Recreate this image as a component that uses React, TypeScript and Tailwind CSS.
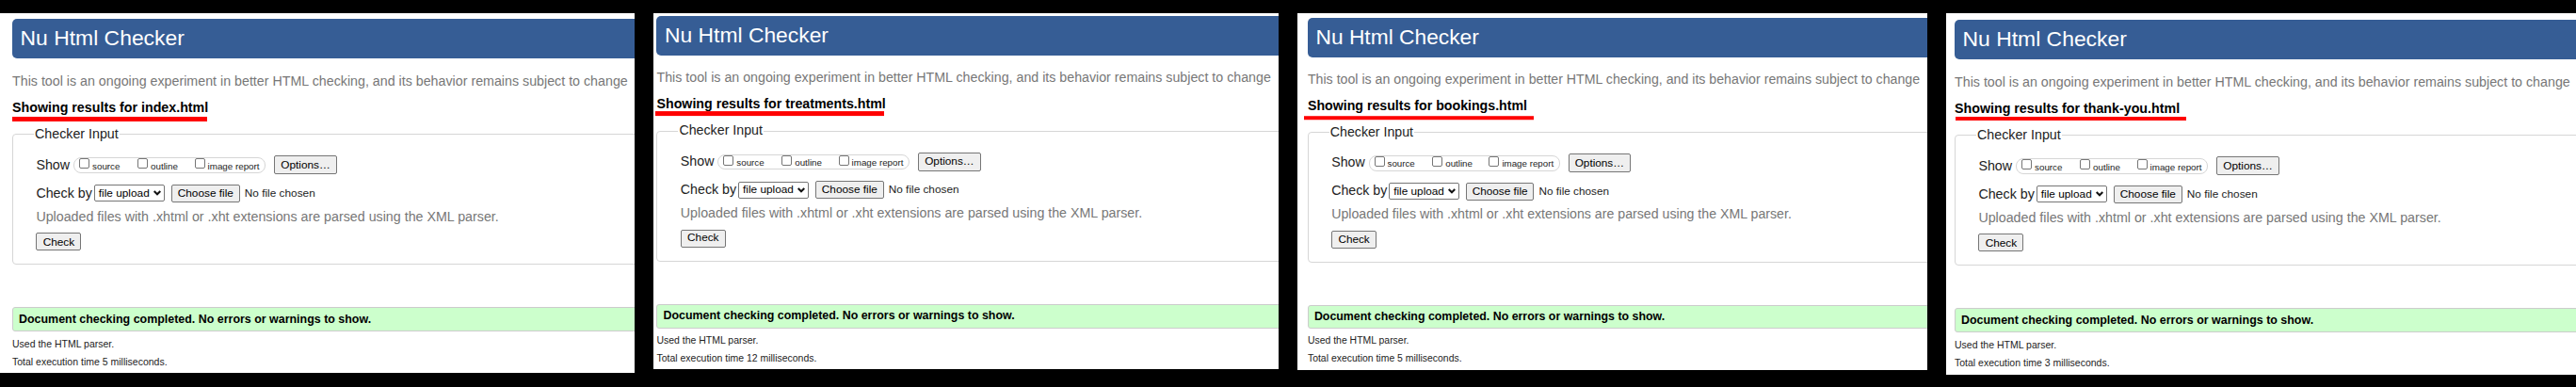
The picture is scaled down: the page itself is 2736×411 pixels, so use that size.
import { ReactNode } from "react";

const panels = [
  { file: "index.html", ms: 5, box: "w-[674px] h-[382px] mr-5", inner: "pl-[13px] pt-[6px]", line: "left-0 top-[109px] w-[207px] h-[5px]" },
  { file: "treatments.html", ms: 12, box: "w-[664px] h-[378px] mr-5", inner: "pl-[3.5px] pt-[3.4px] [zoom:0.998]", line: "left-[-2px] top-[106px] w-[244px] h-[5px]" },
  { file: "bookings.html", ms: 5, box: "w-[669px] h-[379px] mr-5", inner: "pl-[11px] pt-[5.2px] [zoom:0.995]", line: "left-[-4px] top-[110px] w-[245px] h-[4px]" },
  { file: "thank-you.html", ms: 3, box: "w-[669px] h-[384px]", inner: "pl-[9px] pt-[7px]", line: "left-[1px] top-[108px] w-[245px] h-[4px]" },
];

function Toggle({ label, place }: { label: string; place: string }) {
  return (
    <label className={`flex shrink-0 items-center ${place}`}>
      <span className="mr-[3px] mb-[3px] size-[11px] shrink-0 rounded-[2px] border border-[#767676] bg-white" />
      <span className="mt-[2px] text-[9.8px] leading-[13px]">{label}</span>
    </label>
  );
}

function Button({ size, children }: { size: string; children: ReactNode }) {
  return (
    <button className={`flex items-center justify-center rounded-[2px] border border-[#767676] bg-[#efefef] text-[11.83px] leading-[18px] text-black ${size}`}>
      {children}
    </button>
  );
}

export default function App() {
  return (
    <div className="flex h-[411px] w-[2736px] items-start overflow-hidden bg-black pt-[14px] font-['Liberation_Sans',Arial,sans-serif] text-[14.26px] leading-[20px] whitespace-nowrap text-[#222]">
      {panels.map((p) => (
        <section key={p.file} className={`shrink-0 overflow-hidden bg-white ${p.box}`}>
          <div className={`w-[900px] ${p.inner}`}>
            <h1 className="h-[42px] rounded-[5px] bg-[#365d95] pl-[8.6px] text-[22.9px] leading-[41px] text-white">
              Nu Html Checker
            </h1>
            <div className="relative">
              <p className="pt-[14px] text-[#777]">
                This tool is an ongoing experiment in better HTML checking, and its behavior remains subject to change
              </p>
              <h2 className="mt-[8px] font-bold text-black">Showing results for {p.file}</h2>
              <div className={`absolute -translate-y-[47px] bg-[#f00] ${p.line}`} />
            </div>
            <fieldset className="mt-[8px] h-[149px] rounded-[4px] border border-[#d6d6d6] pl-[24.4px]">
              <legend className="-ml-[2.4px] px-[1px]">Checker Input</legend>
              <div className="mt-[13px] flex h-5 items-center">
                Show
                <div className="ml-[4px] flex h-[17px] w-[204px] items-center rounded-[8px] border border-[#d6d6d6] pl-[5px]">
                  <Toggle label="source" place="w-[62px]" />
                  <Toggle label="outline" place="w-[60.5px]" />
                  <Toggle label="image report" place="" />
                </div>
                <div className="ml-[9px]">
                  <Button size="h-5 w-[67px]">Options…</Button>
                </div>
              </div>
              <div className="mt-[10px] flex h-5 items-center">
                Check by
                <div className="ml-[2px] flex h-[18px] w-[75px] items-center rounded-[2px] border border-[#767676] bg-white pl-[4px] text-[11.83px] text-black">
                  file upload
                  <svg className="ml-[4px] h-[6px] w-[8px]" viewBox="0 0 8 6" fill="none" stroke="#111" strokeWidth="2">
                    <path d="M0.7 1 4 4.3 7.3 1" />
                  </svg>
                </div>
                <div className="mr-[5px] ml-[7px]">
                  <Button size="h-[19px] w-[73px]">Choose file</Button>
                </div>
                <span className="text-[11.83px]">No file chosen</span>
              </div>
              <p className="mt-[5px] text-[#777]">
                Uploaded files with .xhtml or .xht extensions are parsed using the XML parser.
              </p>
              <div className="mt-[7px]">
                <Button size="h-[19px] w-[48px]">Check</Button>
              </div>
            </fieldset>
            <p className="mt-[45px] h-[26px] rounded-[3px] border border-[#cccccc] bg-[#ccffcc] pl-[6px] text-[12.45px] leading-[24px] font-bold text-black">
              Document checking completed. No errors or warnings to show.
            </p>
            <p className="mt-[6px] text-[10.5px] leading-[14px]">Used the HTML parser.</p>
            <p className="mt-[5px] text-[10.5px] leading-[14px]">Total execution time {p.ms} milliseconds.</p>
          </div>
        </section>
      ))}
    </div>
  );
}
